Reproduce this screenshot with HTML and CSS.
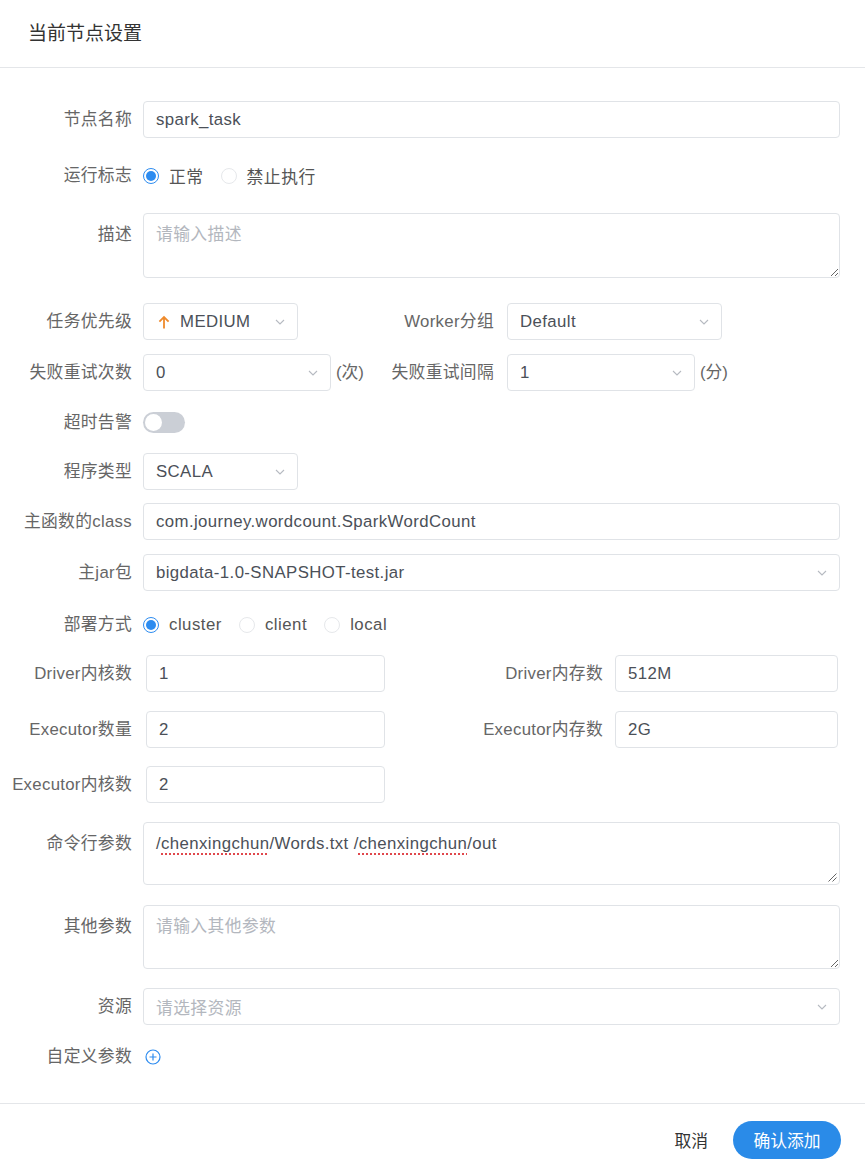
FILE: index.html
```html
<!DOCTYPE html>
<html lang="zh-CN">
<head>
  <meta charset="UTF-8">
  <meta name="viewport" content="width=device-width, initial-scale=1.0">
  <title>当前节点设置</title>
  <link rel="stylesheet" href="styles.css">
</head>
<body>

  <div class="dialog">
    <div class="dialog-header">当前节点设置</div>

    <div class="dialog-body">

      <div class="form-row gap-md">
        <label class="form-label">节点名称</label>
        <div class="form-control">
          <input class="input full" type="text" value="spark_task">
        </div>
      </div>

      <div class="form-row gap-md">
        <label class="form-label">运行标志</label>
        <div class="form-control">
          <span class="radio checked"></span><span class="radio-text">正常</span>
          <span class="radio"></span><span class="radio-text">禁止执行</span>
        </div>
      </div>

      <div class="form-row gap-lg area-row">
        <label class="form-label">描述</label>
        <div class="form-control">
          <textarea class="textarea" placeholder="请输入描述"></textarea>
        </div>
      </div>

      <div class="form-row mb-14">
        <div class="form-group narrow">
          <label class="form-label">任务优先级</label>
          <div class="select w-155">
            <svg class="priority-icon" width="12" height="14" viewBox="0 0 12 14">
              <path d="M6 13.5V2.2M1.4 6.6L6 2l4.6 4.6" fill="none" stroke="#ef8a2b" stroke-width="1.8"/>
            </svg>
            <span>MEDIUM</span>
            <svg class="arrow" width="10" height="6" viewBox="0 0 10 6"><path d="M1 1l4 4 4-4" fill="none" stroke="#b6bac1" stroke-width="1.1"/></svg>
          </div>
        </div>
        <label class="sub-label">Worker分组</label>
        <div class="select w-215">
          <span>Default</span>
          <svg class="arrow" width="10" height="6" viewBox="0 0 10 6"><path d="M1 1l4 4 4-4" fill="none" stroke="#b6bac1" stroke-width="1.1"/></svg>
        </div>
      </div>

      <div class="form-row">
        <div class="form-group narrow">
          <label class="form-label">失败重试次数</label>
          <div class="select w-188">
            <span>0</span>
            <svg class="arrow" width="10" height="6" viewBox="0 0 10 6"><path d="M1 1l4 4 4-4" fill="none" stroke="#b6bac1" stroke-width="1.1"/></svg>
          </div>
          <span class="unit">(次)</span>
        </div>
        <label class="sub-label">失败重试间隔</label>
        <div class="select w-188">
          <span>1</span>
          <svg class="arrow" width="10" height="6" viewBox="0 0 10 6"><path d="M1 1l4 4 4-4" fill="none" stroke="#b6bac1" stroke-width="1.1"/></svg>
        </div>
        <span class="unit">(分)</span>
      </div>

      <div class="form-row mb-12">
        <label class="form-label">超时告警</label>
        <div class="form-control">
          <span class="switch"><span class="switch-knob"></span></span>
        </div>
      </div>

      <div class="form-row">
        <label class="form-label">程序类型</label>
        <div class="form-control">
          <div class="select w-155">
            <span>SCALA</span>
            <svg class="arrow" width="10" height="6" viewBox="0 0 10 6"><path d="M1 1l4 4 4-4" fill="none" stroke="#b6bac1" stroke-width="1.1"/></svg>
          </div>
        </div>
      </div>

      <div class="form-row mb-14">
        <label class="form-label">主函数的class</label>
        <div class="form-control">
          <input class="input full" type="text" value="com.journey.wordcount.SparkWordCount">
        </div>
      </div>

      <div class="form-row mb-15">
        <label class="form-label">主jar包</label>
        <div class="form-control">
          <div class="select full">
            <span>bigdata-1.0-SNAPSHOT-test.jar</span>
            <svg class="arrow" width="10" height="6" viewBox="0 0 10 6"><path d="M1 1l4 4 4-4" fill="none" stroke="#b6bac1" stroke-width="1.1"/></svg>
          </div>
        </div>
      </div>

      <div class="form-row mb-12">
        <label class="form-label">部署方式</label>
        <div class="form-control">
          <span class="radio checked"></span><span class="radio-text">cluster</span>
          <span class="radio"></span><span class="radio-text">client</span>
          <span class="radio"></span><span class="radio-text">local</span>
        </div>
      </div>

      <div class="form-row gap-md">
        <div class="form-group wide">
          <label class="form-label">Driver内核数</label>
          <input class="input w-239" type="text" value="1">
        </div>
        <label class="sub-label wide-label">Driver内存数</label>
        <input class="input w-223" type="text" value="512M">
      </div>

      <div class="form-row mb-18">
        <div class="form-group wide">
          <label class="form-label">Executor数量</label>
          <input class="input w-239" type="text" value="2">
        </div>
        <label class="sub-label wide-label">Executor内存数</label>
        <input class="input w-223" type="text" value="2G">
      </div>

      <div class="form-row gap-md">
        <div class="form-group wide">
          <label class="form-label">Executor内核数</label>
          <input class="input w-239" type="text" value="2">
        </div>
      </div>

      <div class="form-row mb-20 area-row">
        <label class="form-label">命令行参数</label>
        <div class="form-control">
          <div class="textarea filled">/<span class="typo">chenxingchun</span>/Words.txt /<span class="typo">chenxingchun</span>/out
            <svg class="grip" width="10" height="10" viewBox="0 0 10 10"><path d="M9.5 1.5l-8 8M9.5 5.5l-4 4" stroke="#666" stroke-width="1"/></svg>
          </div>
        </div>
      </div>

      <div class="form-row gap-md area-row">
        <label class="form-label">其他参数</label>
        <div class="form-control">
          <textarea class="textarea tall" placeholder="请输入其他参数"></textarea>
        </div>
      </div>

      <div class="form-row">
        <label class="form-label">资源</label>
        <div class="form-control">
          <div class="select full">
            <span class="placeholder">请选择资源</span>
            <svg class="arrow" width="10" height="6" viewBox="0 0 10 6"><path d="M1 1l4 4 4-4" fill="none" stroke="#b6bac1" stroke-width="1.1"/></svg>
          </div>
        </div>
      </div>

      <div class="form-row">
        <label class="form-label">自定义参数</label>
        <div class="form-control">
          <svg class="add-icon" width="16" height="16" viewBox="0 0 16 16">
            <circle cx="8" cy="8" r="7" fill="none" stroke="#2d8cf0" stroke-width="1.2"/>
            <path d="M8 4.5v7M4.5 8h7" stroke="#2d8cf0" stroke-width="1.2"/>
          </svg>
        </div>
      </div>

    </div>

    <div class="dialog-footer">
      <a class="btn-text">取消</a>
      <button class="btn-primary">确认添加</button>
    </div>
  </div>

</body>
</html>
```

FILE: styles.css
```css
* {
  box-sizing: border-box;
}

body {
  margin: 0;
  background: #fff;
  color: #333;
  font-family: "Liberation Sans", "Noto Sans CJK SC", sans-serif;
  font-size: 16.8px;
}

input, textarea, button {
  font-family: inherit;
  font-size: inherit;
}

.dialog-header {
  height: 68px;
  padding-left: 28px;
  line-height: 67px;
  font-size: 19px;
  color: #333;
  border-bottom: 1px solid #e4e6e9;
}

.dialog-body {
  padding: 33px 25px 0 0;
}

.form-row {
  display: flex;
  align-items: flex-start;
  margin-bottom: 13px;
}

.form-row:last-child {
  margin-bottom: 0;
}

.form-row.gap-md { margin-bottom: 19px; }
.form-row.gap-lg { margin-bottom: 25px; }
.form-row.mb-12 { margin-bottom: 12px; }
.form-row.mb-14 { margin-bottom: 14px; }
.form-row.mb-15 { margin-bottom: 15px; }
.form-row.mb-18 { margin-bottom: 18px; }
.form-row.mb-20 { margin-bottom: 20px; }

.form-label {
  flex: 0 0 132px;
  margin-right: 11px;
  padding-top: 1px;
  text-align: right;
  line-height: 36px;
  color: #666;
  letter-spacing: 0.3px;
  white-space: nowrap;
}

.area-row .form-label {
  padding-top: 4px;
}

.form-control {
  flex: 1;
  display: flex;
  align-items: center;
  min-height: 37px;
}

.form-group {
  display: flex;
  align-items: center;
  flex: none;
}

.form-group.narrow { width: 380px; }
.form-group.wide { width: 470px; }
.form-group.wide .form-label { margin-right: 14px; }

.sub-label {
  width: 114px;
  margin-right: 13px;
  padding-top: 1px;
  text-align: right;
  line-height: 36px;
  color: #666;
  letter-spacing: 0.3px;
  white-space: nowrap;
}

.sub-label.wide-label {
  width: 133px;
  margin-right: 12px;
}

.input, .select {
  height: 37px;
  padding: 1px 12px 0;
  border: 1px solid #e0e3e7;
  border-radius: 4px;
  color: #4b5058;
  background: #fff;
  letter-spacing: 0.4px;
  outline: none;
}

.select {
  display: flex;
  align-items: center;
  flex: none;
}

.select .arrow {
  margin-left: auto;
}

.placeholder {
  color: #b3b7be;
}

.full { width: 100%; }
.w-155 { width: 155px; }
.w-188 { width: 188px; }
.w-215 { width: 215px; }
.w-239 { width: 239px; }
.w-223 { width: 223px; }

.priority-icon {
  margin: 0 10px 0 2px;
}

.unit {
  margin-left: 5px;
  padding-top: 1px;
  line-height: 36px;
  color: #666;
}

.radio {
  width: 16px;
  height: 16px;
  border: 1px solid #e6e8eb;
  border-radius: 50%;
  flex: none;
  position: relative;
}

.radio.checked {
  border-color: #2d8cf0;
}

.radio.checked::after {
  content: "";
  position: absolute;
  left: 2px;
  top: 2px;
  width: 10px;
  height: 10px;
  border-radius: 50%;
  background: #2d8cf0;
}

.radio-text {
  margin: 0 17px 0 10px;
  color: #555;
  letter-spacing: 0.5px;
}

.switch {
  width: 42px;
  height: 21px;
  border-radius: 11px;
  background: #cbcfd6;
  padding: 2px;
  display: flex;
}

.switch-knob {
  width: 17px;
  height: 17px;
  border-radius: 50%;
  background: #fff;
}

.textarea {
  width: 100%;
  height: 65px;
  padding: 10px 12px;
  line-height: 22px;
  border: 1px solid #e0e3e7;
  border-radius: 4px;
  color: #4b5058;
  letter-spacing: 0.4px;
  outline: none;
  resize: vertical;
}

.textarea::placeholder {
  color: #b3b7be;
}

.textarea.filled {
  height: 63px;
  position: relative;
}

.textarea.tall {
  height: 64px;
}

.typo {
  text-decoration: underline dotted #e0474c;
  text-decoration-thickness: 2px;
  text-underline-offset: 4px;
}

.grip {
  position: absolute;
  right: 2px;
  bottom: 2px;
}

.add-icon {
  margin-left: 2px;
}

.dialog-footer {
  margin-top: 28px;
  padding: 17px 24px 0 0;
  border-top: 1px solid #e4e6e9;
  display: flex;
  justify-content: flex-end;
  align-items: center;
}

.btn-text {
  margin-right: 25px;
  color: #333;
  cursor: pointer;
}

.btn-primary {
  width: 108px;
  height: 38px;
  border: none;
  border-radius: 19px;
  background: #2a8be8;
  color: #fff;
  cursor: pointer;
}
```
